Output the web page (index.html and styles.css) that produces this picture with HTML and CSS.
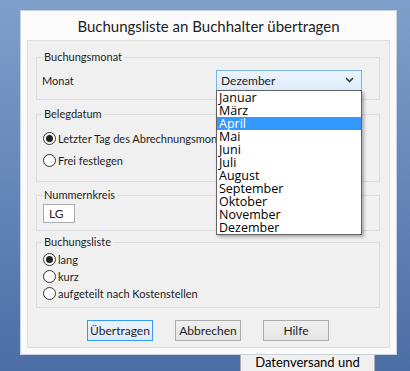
FILE: index.html
```html
<!DOCTYPE html>
<html lang="de">
<head>
    <meta charset="UTF-8">
    <meta name="viewport" content="width=device-width, initial-scale=1.0">
    <title>Buchungsliste an Buchhalter übertragen</title>
    <link rel="stylesheet" href="styles.css">
</head>
<body>
    <div class="dialog">
        <div class="dialog-title">Buchungsliste an Buchhalter übertragen</div>
        <div class="dialog-body">
            <fieldset class="group group-month">
                <legend>Buchungsmonat</legend>
                <div class="month-row">
                    <span class="month-label">Monat</span>
                    <div class="combo">
                        <div class="combo-box">
                            <span>Dezember</span>
                            <svg class="combo-arrow" width="9" height="6" viewBox="0 0 9 6">
                                <path d="M1 1 L4.5 4.5 L8 1" fill="none" stroke="#3c3c3c" stroke-width="1.6"/>
                            </svg>
                        </div>
                        <ul class="combo-list">
                            <li>Januar</li>
                            <li>März</li>
                            <li class="selected">April</li>
                            <li>Mai</li>
                            <li>Juni</li>
                            <li>Juli</li>
                            <li>August</li>
                            <li>September</li>
                            <li>Oktober</li>
                            <li>November</li>
                            <li>Dezember</li>
                        </ul>
                    </div>
                </div>
            </fieldset>

            <fieldset class="group group-date">
                <legend>Belegdatum</legend>
                <div class="radio-row wide"><span class="radio checked"></span><span class="radio-text clipped">Letzter Tag des Abrechnungsmonats</span></div>
                <div class="radio-row wide"><span class="radio"></span><span class="radio-text">Frei festlegen</span></div>
            </fieldset>

            <fieldset class="group group-number">
                <legend>Nummernkreis</legend>
                <div class="text-input">LG</div>
            </fieldset>

            <fieldset class="group group-list">
                <legend>Buchungsliste</legend>
                <div class="radio-row"><span class="radio checked"></span><span class="radio-text">lang</span></div>
                <div class="radio-row"><span class="radio"></span><span class="radio-text">kurz</span></div>
                <div class="radio-row"><span class="radio"></span><span class="radio-text">aufgeteilt nach Kostenstellen</span></div>
            </fieldset>

            <div class="buttons">
                <button class="btn default">Übertragen</button>
                <button class="btn">Abbrechen</button>
                <button class="btn">Hilfe</button>
            </div>
        </div>
    </div>
    <div class="behind-button">Datenversand und</div>
</body>
</html>
```

FILE: styles.css
```css
html, body {
    height: 100%;
}

body {
    margin: 0;
    padding: 10px 0 0 20px;
    box-sizing: border-box;
    overflow: hidden;
    background: linear-gradient(#7f9fcb, #4b6ea5);
    font-family: Lato, "Open Sans", sans-serif;
    font-size: 11px;
    color: #1e1e1e;
}

.dialog {
    width: 377px;
    box-sizing: border-box;
    background-color: #fbfbfb;
    border: 1px solid #c9d3e0;
    padding: 0 6px 6px 6px;
    position: relative;
    z-index: 1;
}

.dialog-title {
    height: 29px;
    line-height: 31px;
    text-align: center;
    font-size: 15px;
    color: #222;
}

.dialog-body {
    background-color: #f0f0f0;
    border: 1px solid #dedede;
    padding: 9px 9px 6px 8px;
}

/* Group boxes */
.group {
    margin: 0;
    border: 1px solid #dcdcdc;
    padding: 0 6px;
    min-width: 0;
}

.group legend {
    padding: 0 2px 0 1px;
    line-height: 14px;
    height: 14px;
}

.group-month {
    padding-bottom: 9px;
}

.group-date {
    margin-top: 7px;
    padding-bottom: 12px;
}

.group-number {
    margin-top: 6px;
    padding-bottom: 7px;
}

.group-list {
    margin-top: 4px;
    padding-bottom: 5px;
}

.month-row {
    display: flex;
    align-items: center;
    margin-top: 6px;
    height: 20px;
}

.month-label {
    width: 174px;
    margin-left: -1px;
}

/* Combo box with open list */
.combo {
    position: relative;
}

.combo-box {
    width: 146px;
    height: 21px;
    box-sizing: border-box;
    border: 1px solid #7eb4ea;
    background: linear-gradient(#ecf4fc, #dcecfc);
    display: flex;
    align-items: center;
    justify-content: space-between;
    padding: 0 7px 0 4px;
    font-size: 12px;
}

.combo-list {
    position: absolute;
    left: 0;
    top: 20px;
    width: 146px;
    box-sizing: border-box;
    margin: 0;
    padding: 0;
    list-style: none;
    background-color: #fff;
    border: 1px solid #646464;
    box-shadow: 2px 2px 3px rgba(0, 0, 0, 0.3);
    z-index: 2;
}

.combo-list li {
    height: 13px;
    line-height: 13px;
    padding-left: 2px;
    font-family: "Open Sans", sans-serif;
    font-size: 12.5px;
    color: #000;
}

.combo-list li.selected {
    background-color: #3399ff;
    color: #fff;
}

/* Radio buttons */
.radio-row {
    display: flex;
    align-items: center;
    height: 17px;
    white-space: nowrap;
}

.radio-row.wide {
    height: 18px;
}

.radio-text.clipped {
    width: 159px;
    overflow: hidden;
}

.group-date .radio-row:first-of-type {
    margin-top: 8px;
}

.group-date .radio-row + .radio-row {
    margin-top: 4px;
}

.group-list .radio-row:first-of-type {
    margin-top: 2px;
}

.radio {
    width: 13px;
    height: 13px;
    box-sizing: border-box;
    border: 1px solid #333;
    border-radius: 50%;
    background-color: #fff;
    margin-right: 2px;
    display: flex;
    align-items: center;
    justify-content: center;
    flex-shrink: 0;
}

.radio.checked::after {
    content: "";
    width: 7px;
    height: 7px;
    border-radius: 50%;
    background-color: #222;
}

.text-input {
    width: 32px;
    height: 19px;
    box-sizing: border-box;
    margin-top: 2px;
    border: 1px solid #abadb3;
    background-color: #fff;
    line-height: 17px;
    padding-left: 5px;
    font-size: 12px;
}

/* Buttons */
.buttons {
    display: flex;
    justify-content: center;
    gap: 22px;
    margin-top: 12px;
}

.btn {
    width: 66px;
    height: 21px;
    padding: 0;
    border: 1px solid #acacac;
    background: linear-gradient(#f0f0f0, #e5e5e5);
    font-family: inherit;
    font-size: 12px;
    color: #1e1e1e;
}

.btn.default {
    border-color: #3399ff;
    background: linear-gradient(#ecf4fc, #dcecfc);
}

.behind-button {
    margin-left: 220px;
    width: 135px;
    height: 20px;
    box-sizing: border-box;
    background-color: #f0f0f0;
    border-left: 1px solid #adadad;
    border-right: 1px solid #adadad;
    text-align: center;
    font-size: 13px;
    line-height: 14px;
    color: #000;
}
```
